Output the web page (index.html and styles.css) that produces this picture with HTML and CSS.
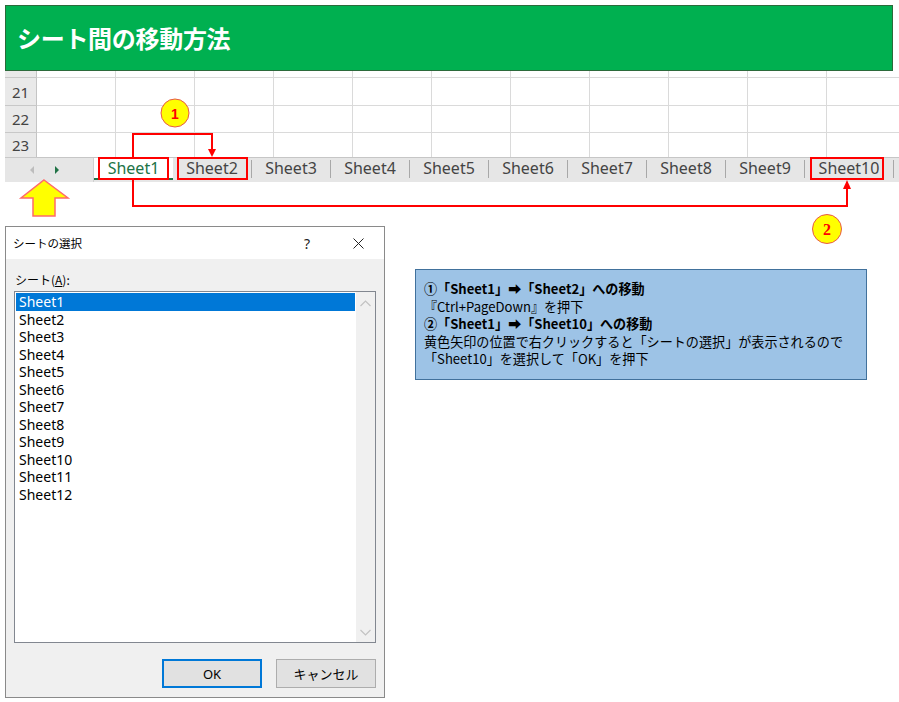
FILE: index.html
```html
<!DOCTYPE html>
<html lang="ja">
<head>
<meta charset="utf-8">
<title>シート間の移動方法</title>
<link rel="stylesheet" href="styles.css">
</head>
<body>
<div class="page">
  <header class="banner"><h1>シート間の移動方法</h1></header>

  <section class="sheet">
    <div class="row r20"><div class="rh"></div><div class="c"></div><div class="c"></div><div class="c"></div><div class="c"></div><div class="c"></div><div class="c"></div><div class="c"></div><div class="c"></div><div class="c"></div><div class="c"></div><div class="c"></div></div>
    <div class="row r21"><div class="rh">21</div><div class="c"></div><div class="c"></div><div class="c"></div><div class="c"></div><div class="c"></div><div class="c"></div><div class="c"></div><div class="c"></div><div class="c"></div><div class="c"></div><div class="c"></div></div>
    <div class="row r22"><div class="rh">22</div><div class="c"></div><div class="c"></div><div class="c"></div><div class="c"></div><div class="c"></div><div class="c"></div><div class="c"></div><div class="c"></div><div class="c"></div><div class="c"></div><div class="c"></div></div>
    <div class="row r23"><div class="rh">23</div><div class="c"></div><div class="c"></div><div class="c"></div><div class="c"></div><div class="c"></div><div class="c"></div><div class="c"></div><div class="c"></div><div class="c"></div><div class="c"></div><div class="c"></div></div>
    <div class="tabbar">
      <div class="nav"><span class="tri-l"></span><span class="tri-r"></span></div>
      <div class="tab active">Sheet1</div>
      <div class="tab">Sheet2</div>
      <div class="tab">Sheet3</div>
      <div class="tab">Sheet4</div>
      <div class="tab">Sheet5</div>
      <div class="tab">Sheet6</div>
      <div class="tab">Sheet7</div>
      <div class="tab">Sheet8</div>
      <div class="tab">Sheet9</div>
      <div class="tab wide">Sheet10</div>
    </div>
  </section>

  <section class="lower">
    <div class="dialog">
      <div class="dlg-title">
        <span class="dlg-title-text">シートの選択</span>
        <span class="help">?</span>
        <span class="close"><svg width="11" height="11" viewBox="0 0 11 11"><path d="M0.5 0.5 L10.5 10.5 M10.5 0.5 L0.5 10.5" stroke="#222" stroke-width="1" fill="none"/></svg></span>
      </div>
      <div class="dlg-body">
        <div class="label">シート(<u>A</u>):</div>
        <div class="listbox">
          <ul class="list">
            <li class="item sel">Sheet1</li>
            <li class="item">Sheet2</li>
            <li class="item">Sheet3</li>
            <li class="item">Sheet4</li>
            <li class="item">Sheet5</li>
            <li class="item">Sheet6</li>
            <li class="item">Sheet7</li>
            <li class="item">Sheet8</li>
            <li class="item">Sheet9</li>
            <li class="item">Sheet10</li>
            <li class="item">Sheet11</li>
            <li class="item">Sheet12</li>
          </ul>
          <div class="scroll">
            <svg width="11" height="7" viewBox="0 0 11 7"><path d="M0.5 6 L5.5 1 L10.5 6" stroke="#c2c2c2" stroke-width="1.2" fill="none"/></svg>
            <svg width="11" height="7" viewBox="0 0 11 7"><path d="M0.5 1 L5.5 6 L10.5 1" stroke="#c2c2c2" stroke-width="1.2" fill="none"/></svg>
          </div>
        </div>
        <div class="btns">
          <button class="btn default">OK</button>
          <button class="btn">キャンセル</button>
        </div>
      </div>
    </div>

    <div class="info">
      <div class="b">①「Sheet1」➡「Sheet2」への移動</div>
      <div>『Ctrl+PageDown』を押下</div>
      <div class="b">②「Sheet1」➡「Sheet10」への移動</div>
      <div>黄色矢印の位置で右クリックすると「シートの選択」が表示されるので</div>
      <div>「Sheet10」を選択して「OK」を押下</div>
    </div>
  </section>

  <svg class="annot" width="899" height="702" viewBox="0 0 899 702">
    <rect x="99" y="158" width="69" height="21" fill="none" stroke="#ff0000" stroke-width="2"/>
    <rect x="178" y="158" width="69" height="21" fill="none" stroke="#ff0000" stroke-width="2"/>
    <rect x="811" y="158" width="72" height="21" fill="none" stroke="#ff0000" stroke-width="2"/>
    <path d="M133 158 V134 H212 V150" fill="none" stroke="#ff0000" stroke-width="2"/>
    <polygon points="208,149 216,149 212,157" fill="#ff0000"/>
    <path d="M133 179 V206 H847 V188" fill="none" stroke="#ff0000" stroke-width="2"/>
    <polygon points="843,189 851,189 847,180" fill="#ff0000"/>
    <circle cx="175" cy="113" r="14" fill="#ffff00" stroke="#e8584a" stroke-width="1"/>
    <text class="num1" x="175" y="118.5" text-anchor="middle">1</text>
    <circle cx="827" cy="229" r="14.5" fill="#ffff00" stroke="#e8584a" stroke-width="1"/>
    <text class="num2" x="827" y="235" text-anchor="middle">2</text>
    <polygon points="44,180 68,198 55,198 55,216 33,216 33,198 21,198" fill="#ffff00" stroke="#ff6a6a" stroke-width="1.5" stroke-linejoin="miter"/>
  </svg>
</div>
</body>
</html>
```

FILE: styles.css
```css
* { box-sizing: border-box; }

body {
  margin: 0;
  background: #ffffff;
  font-family: "Noto Sans", "Noto Sans CJK JP", sans-serif;
  color: #000;
}

.page {
  position: relative;
  width: 899px;
  height: 702px;
  padding: 5px 0 0 5px;
  overflow: hidden;
}

/* banner */
.banner {
  width: 888px;
  height: 66px;
  background: #00b050;
  border: 1px solid #2b6a3b;
  display: flex;
  align-items: center;
  padding-left: 11px;
}
.banner h1 {
  margin: 0;
  color: #ffffff;
  font: bold 24px/1 "Noto Sans CJK JP", sans-serif;
  letter-spacing: -0.3px;
}

/* sheet grid */
.sheet { width: 894px; }
.row {
  display: flex;
  border-bottom: 1px solid #dadada;
}
.r20 { height: 7px; }
.r21 { height: 28px; }
.r22 { height: 27px; }
.r23 { height: 24px; border-bottom: none; }
.rh {
  width: 32px;
  flex: none;
  background: #e9e9e9;
  border-right: 1px solid #c4c4c4;
  color: #444;
  font-size: 15px;
  display: flex;
  align-items: center;
  justify-content: center;
}
.row .rh { box-shadow: 0 1px 0 #c8c8c8; }
.c {
  width: 79px;
  flex: none;
  border-right: 1px solid #dadada;
}

/* tab bar */
.tabbar {
  display: flex;
  height: 25px;
  border-top: 1px solid #c6c6c6;
  background: #e6e6e6;
}
.nav {
  width: 89px;
  flex: none;
  border-right: 1px solid #d0d0d0;
  display: flex;
  align-items: center;
  padding-left: 25px;
  gap: 21px;
}
.tri-l {
  width: 0; height: 0;
  border-top: 4px solid transparent;
  border-bottom: 4px solid transparent;
  border-right: 4px solid #bdbdbd;
}
.tri-r {
  width: 0; height: 0;
  border-top: 4px solid transparent;
  border-bottom: 4px solid transparent;
  border-left: 4px solid #217346;
}
.tab {
  width: 79px;
  flex: none;
  height: 18px;
  margin-top: 2px;
  border-right: 1px solid #a8a8a8;
  text-align: center;
  font-size: 16px;
  line-height: 17px;
  color: #444;
}
.tab.wide { width: 89px; }
.tab.active {
  height: 22px;
  margin-top: 0;
  background: #ffffff;
  border-right: none;
  border-bottom: 2px solid #217346;
  line-height: 20px;
  color: #217346;
}

/* lower area */
.lower {
  display: flex;
  align-items: flex-start;
  margin-top: 44px;
}

/* dialog */
.dialog {
  width: 380px;
  height: 472px;
  flex: none;
  border: 1px solid #8a8a8a;
  background: #f0f0f0;
  display: flex;
  flex-direction: column;
}
.dlg-title {
  height: 32px;
  flex: none;
  background: #ffffff;
  display: flex;
  align-items: center;
}
.dlg-title-text {
  flex: 1;
  padding-left: 7px;
  font: 11.5px "Noto Sans CJK JP", sans-serif;
  color: #000;
}
.help {
  width: 50px;
  text-align: center;
  font: 14px "Noto Sans", sans-serif;
  color: #222;
}
.close {
  width: 52px;
  display: flex;
  justify-content: center;
  align-items: center;
}
.dlg-body {
  flex: 1;
  padding: 12px 8px 0 8px;
  display: flex;
  flex-direction: column;
}
.label {
  height: 18px;
  line-height: 18px;
  font: 12px/18px "Noto Sans CJK JP", sans-serif;
  padding-left: 1px;
}
.listbox {
  margin-top: 2px;
  height: 352px;
  border: 1px solid #828790;
  background: #ffffff;
  display: flex;
}
.list {
  flex: 1;
  list-style: none;
  margin: 0;
  padding: 1px;
}
.item {
  height: 17.5px;
  line-height: 17.5px;
  padding-left: 3px;
  font-size: 14px;
  color: #000;
}
.item.sel {
  background: #0078d7;
  color: #ffffff;
}
.scroll {
  width: 19px;
  flex: none;
  background: #f0f0f0;
  display: flex;
  flex-direction: column;
  justify-content: space-between;
  align-items: center;
  padding: 8px 0 6px;
}
.btns {
  display: flex;
  justify-content: flex-end;
  gap: 14px;
  margin-top: 16px;
}
.btn {
  width: 100px;
  height: 29px;
  border: 1px solid #adadad;
  background: #e1e1e1;
  font: 13px "Noto Sans", "Noto Sans CJK JP", sans-serif;
  color: #000;
  padding: 0;
}
.btn.default { border: 2px solid #0078d7; }

/* info box */
.info {
  margin: 43px 0 0 30px;
  width: 452px;
  height: 111px;
  flex: none;
  background: #9dc3e6;
  border: 1px solid #41719c;
  padding: 10px 8px;
  font: 13.1px/17.5px "Noto Sans CJK JP", sans-serif;
  color: #000;
  white-space: nowrap;
}
.info .b { font-weight: bold; }

/* annotations */
.annot {
  position: absolute;
  left: 0;
  top: 0;
  pointer-events: none;
}
.num1 {
  font: bold 14px "Liberation Sans", sans-serif;
  fill: #ff0000;
}
.num2 {
  font: bold 16px "Liberation Serif", serif;
  fill: #ff0000;
}
```
